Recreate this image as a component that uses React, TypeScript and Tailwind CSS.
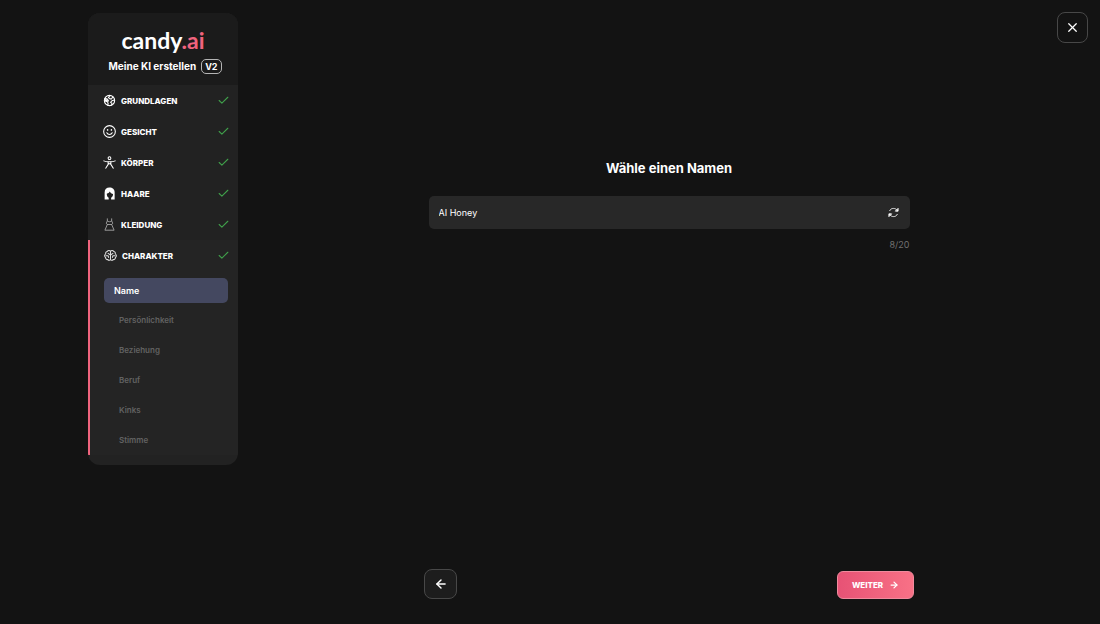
import { useState } from "react";
import type { ReactNode } from "react";
import clsx from "clsx";
import { ArrowLeft, ArrowRight, Check, X } from "lucide-react";

type Step = { id: string; label: string; icon: ReactNode };

const svgProps = {
  viewBox: "0 0 24 24",
  fill: "none",
  stroke: "currentColor",
  strokeWidth: 1.8,
  strokeLinecap: "round" as const,
  strokeLinejoin: "round" as const,
  "aria-hidden": true,
};

const STEPS: Step[] = [
  {
    id: "basics",
    label: "Grundlagen",
    icon: (
      <svg {...svgProps} className="size-[13px]" strokeWidth={2}>
        <circle cx="12" cy="12" r="9.5" />
        <path d="M3.500 8.500l4 .5 2.500 3-1.500 3 1 3-1 2.500" />
        <path d="M13 3l-3 3.500 3 2.500h3l2-4" />
        <path d="M21 11l-4.500 1.500-2.500 3 2.500 1.500-.5 3.500" />
        <path d="M3 9l5 1 1.500 3-2 2-4-1z" fill="currentColor" stroke="none" />
      </svg>
    ),
  },
  {
    id: "face",
    label: "Gesicht",
    icon: (
      <svg {...svgProps} className="size-[13px]" strokeWidth={2}>
        <circle cx="12" cy="12" r="10.8" />
        <path d="M7 14.500c1 2 3 3 5 3s4-1 5-3" />
        <path d="M8.500 8.500v1M15.500 8.500v1" strokeWidth={2.600} />
      </svg>
    ),
  },
  {
    id: "body",
    label: "Körper",
    icon: (
      <svg {...svgProps} className="size-[13px]" strokeWidth={1.900}>
        <circle cx="12" cy="4" r="2.500" />
        <path d="M1.500 9c3 1.200 6 1.700 8 1.700h5c2 0 5-.5 8-1.700" />
        <path d="M9.500 11v4.500L5 22.500M14.500 11v4.500l4.500 7M9.500 15.500L12 14l2.500 1.500" />
      </svg>
    ),
  },
  {
    id: "hair",
    label: "Haare",
    icon: (
      <svg viewBox="0 0 24 24" fill="currentColor" className="size-[13px]" aria-hidden="true">
        <path d="M3 23V10C3 4.500 6.500 1 12 1s9.500 3.500 9.500 9v13H15v-3c2.500-1.500 3.500-4 3.500-7-2.500-.5-4.500-2-6-4.500-1 2-3 3.500-5.500 4 0 3.500 1 6 3.500 7.500V23z" />
      </svg>
    ),
  },
  {
    id: "clothes",
    label: "Kleidung",
    icon: (
      <svg {...svgProps} className="size-[13px] text-[#a3a3a3]" strokeWidth={1.700}>
        <path d="M8 1.500v4c0 2-2 2-2 4L8 12 3.500 22.500h17L16 12l2-2.500c0-2-2-2-2-4v-4M8 5.500c1.500 2 6.500 2 8 0M8 12h8" />
      </svg>
    ),
  },
];

const CHARACTER_TOPICS = ["Persönlichkeit", "Beziehung", "Beruf", "Kinks", "Stimme"];

function BrainIcon() {
  return (
    <svg {...svgProps} className="size-[13px] text-[#dedede]" strokeWidth={1.900}>
      <path d="M12 4.500c-1-2.200-5-2.200-6 .3-2.500.2-3.500 2.400-2.700 4.200-2.800 1.500-2.800 5.500-.3 6.800-.3 2.700 2 4.200 4 3.700 1 2.200 4.300 1.800 5-.3" />
      <path d="M12 4.500c1-2.200 5-2.200 6 .3 2.500.2 3.500 2.400 2.700 4.200 2.800 1.500 2.800 5.500.3 6.800.3 2.700-2 4.200-4 3.700-1 2.200-4.300 1.800-5-.3" />
      <path d="M12 4.500V19M12 11L7.500 8M12 11l4.500-3M3.500 12.500h4l1 3M20.500 12.500h-4l-1 3" />
    </svg>
  );
}

function RefreshIcon() {
  return (
    <svg {...svgProps} className="size-[13px]" strokeWidth={1.600}>
      <path d="M5 8.500C6.500 5.500 9 4.500 12 4.500c2.500 0 5 1 6.500 3M19 15.500c-1.500 3-4 4-7 4-2.500 0-5-1-6.500-3" />
      <path d="M20.500 5v4.500H16zM3.500 19v-4.500H8z" fill="currentColor" />
    </svg>
  );
}

function StepRow({ label, icon, active = false }: { label: string; icon: ReactNode; active?: boolean }) {
  return (
    <button
      type="button"
      aria-current={active ? "step" : undefined}
      className={clsx("flex h-[31px] w-full items-center pr-2 text-left", active ? "pl-3.5" : "pl-[15px]")}
    >
      {icon}
      <span className="flex-1 pl-[5px] text-[8px] font-extrabold uppercase">{label}</span>
      <Check className="size-[13px] text-[#3f9e4a]" strokeWidth={2} aria-hidden="true" />
    </button>
  );
}

function Sidebar() {
  return (
    <aside className="ml-[8%] w-[150px] shrink-0 self-start overflow-hidden rounded-xl bg-[#222222] pb-2.5">
      <header className="flex h-[72px] flex-col items-center bg-[#1b1b1b] pt-[15px]">
        <a href="#" className="font-['Lato',sans-serif] text-[23px] font-bold leading-6">
          candy<span className="text-[#f0647e]">.ai</span>
        </a>
        <div className="mt-1.5 flex items-center gap-[5px] pl-1">
          <h1 className="text-[10px] font-bold leading-4">Meine KI erstellen</h1>
          <span className="rounded-[5px] border border-[#b5b5b5] px-[3px] text-[9px] font-bold leading-[13px]">
            V2
          </span>
        </div>
      </header>

      <nav aria-label="Schritte">
        {STEPS.map((step) => (
          <StepRow key={step.id} label={step.label} icon={step.icon} />
        ))}

        <div className="border-l-2 border-[#f0647e] bg-[#242424]">
          <StepRow label="Charakter" icon={<BrainIcon />} active />
          <div className="pl-3.5 pr-2.5 pt-[7px]">
            <button
              type="button"
              className="mb-0.5 flex h-[25px] w-full items-center rounded-[5px] bg-[#444860] px-2.5 text-[9px] font-semibold"
            >
              Name
            </button>
            {CHARACTER_TOPICS.map((topic) => (
              <button
                key={topic}
                type="button"
                className="flex h-[30px] w-full items-center pl-[15px] text-[8px] font-semibold text-[#626262]"
              >
                {topic}
              </button>
            ))}
          </div>
        </div>
      </nav>
    </aside>
  );
}

export default function App() {
  const [name, setName] = useState("AI Honey");

  return (
    <div className="relative flex min-h-screen bg-[#131313] pt-[13px] font-['Inter',sans-serif] text-white">
      <Sidebar />

      <main className="flex flex-1 flex-col items-center px-6 pb-[25px]">
        <section className="flex w-full max-w-[481px] flex-col pt-[145px]">
          <h2 className="text-center text-[13px] font-bold leading-5">
            <label htmlFor="name">Wähle einen Namen</label>
          </h2>
          <div className="mt-[18px] flex h-[33px] items-center rounded-[5px] bg-[#282828] px-2.5">
            <input
              id="name"
              type="text"
              maxLength={20}
              value={name}
              onChange={(e) => setName(e.target.value)}
              className="min-w-0 flex-1 bg-transparent text-[9px] outline-none"
            />
            <button type="button" aria-label="Neuer Name">
              <RefreshIcon />
            </button>
          </div>
          <p className="mt-2 text-right text-[9px] leading-4 text-[#707070]">{name.length}/20</p>
        </section>

        <footer className="mt-auto flex w-full max-w-[490px] items-end justify-between">
          <button
            type="button"
            aria-label="Zurück"
            className="flex h-[30px] w-[33px] items-center justify-center rounded-lg border border-[#484848] bg-[#1d1d1d]"
          >
            <ArrowLeft className="size-3.5" strokeWidth={2.500} />
          </button>
          <button
            type="button"
            className="flex h-7 w-[77px] items-center justify-center gap-1.5 rounded-md border border-[#f08a9d] bg-linear-to-r from-[#e75275] to-[#f87186] text-[8px] font-extrabold uppercase"
          >
            Weiter
            <ArrowRight className="size-2.5" strokeWidth={3} />
          </button>
        </footer>
      </main>

      <button
        type="button"
        aria-label="Schließen"
        className="absolute right-3 top-3 flex size-[31px] items-center justify-center rounded-lg border border-[#484848] bg-[#131313]"
      >
        <X className="size-[15px]" strokeWidth={2} />
      </button>
    </div>
  );
}
